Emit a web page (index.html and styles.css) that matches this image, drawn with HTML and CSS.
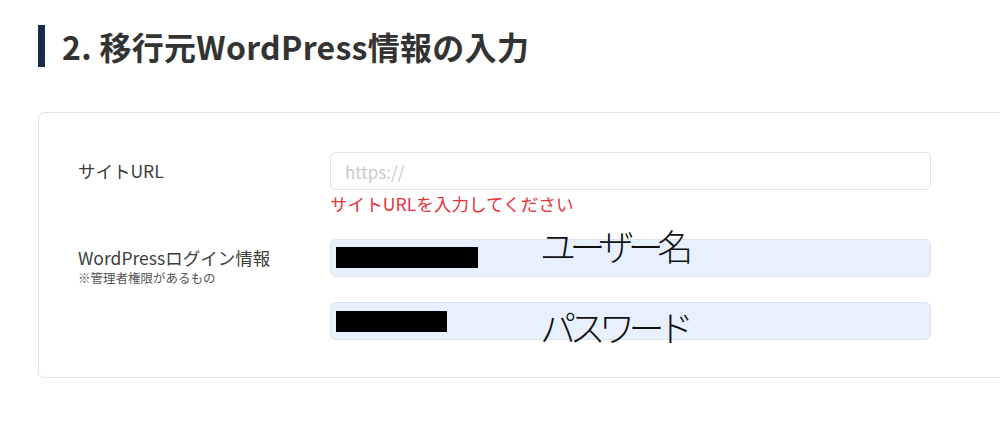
FILE: index.html
```html
<!DOCTYPE html>
<html lang="ja">
<head>
<meta charset="utf-8">
<title>移行元WordPress情報の入力</title>
<link rel="stylesheet" href="styles.css">
</head>
<body>
<div class="page">
  <h2 class="section-title">2. 移行元WordPress情報の入力</h2>
  <div class="card">
    <div class="row">
      <div class="label"><span class="label-main">サイトURL</span></div>
      <div class="control">
        <input class="field" type="text" placeholder="https://">
        <div class="error">サイトURLを入力してください</div>
      </div>
    </div>
    <div class="row row-login">
      <div class="label label-stack">
        <span class="label-main">WordPressログイン情報</span>
        <span class="label-note">※管理者権限があるもの</span>
      </div>
      <div class="control control-stack">
        <div class="field field-filled">
          <span class="redact redact-user"></span>
          <span class="annot annot-user">ユーザー名</span>
        </div>
        <div class="field field-filled">
          <span class="redact redact-pass"></span>
          <span class="annot annot-pass">パスワード</span>
        </div>
      </div>
    </div>
  </div>
</div>
</body>
</html>
```
FILE: styles.css
```css
html, body {
  margin: 0;
  padding: 0;
  background: #ffffff;
  overflow: hidden;
}
body {
  font-family: "Noto Sans CJK JP", "Noto Sans", sans-serif;
  color: #333333;
  width: 1000px;
  height: 424px;
}
.page {
  padding: 25px 0 0 38px;
}
.section-title {
  margin: 0;
  border-left: 7px solid #1b2a4a;
  padding-left: 17px;
  height: 42px;
  line-height: 42px;
  font-size: 32px;
  font-weight: 700;
  color: #333333;
  letter-spacing: 0.3px;
}
.card {
  margin-top: 45px;
  width: 1000px;
  border: 1px solid #e3e3e3;
  border-radius: 6px;
  padding: 39px 0 37px 39px;
}
.row {
  display: flex;
  align-items: flex-start;
}
.row-login {
  margin-top: 23px;
}
.label {
  width: 252px;
  flex: none;
  font-size: 17.5px;
  color: #3d3d3d;
}
.label-main {
  display: block;
  line-height: 38px;
}
.label-note {
  display: block;
  font-size: 12.5px;
  color: #555555;
  line-height: 14px;
  margin-top: -6px;
}
.control {
  width: 601px;
  flex: none;
  display: flex;
  flex-direction: column;
}
.control-stack {
  gap: 25px;
}
.field {
  box-sizing: border-box;
  display: block;
  width: 601px;
  height: 38px;
  margin: 0;
  border: 1px solid #e2e2e2;
  border-radius: 6px;
  padding: 0 14px;
  font-family: "Noto Sans CJK JP", "Noto Sans", sans-serif;
  font-size: 17px;
  color: #333333;
  background: #ffffff;
  outline: none;
}
.field::placeholder {
  color: #c9c9c9;
}
.field-filled {
  position: relative;
  background: #e8f0fe;
  border-color: #dde3ec;
  padding: 0;
}
.redact {
  position: absolute;
  left: 5px;
  background: #000000;
  height: 21px;
}
.redact-user {
  top: 7px;
  width: 142px;
}
.redact-pass {
  top: 8px;
  width: 111px;
}
.annot {
  position: absolute;
  left: 209px;
  font-size: 36px;
  line-height: 1;
  font-weight: 300;
  color: #111111;
  letter-spacing: -6.5px;
  white-space: nowrap;
}
.annot-user {
  top: -13px;
}
.annot-pass {
  top: 5px;
}
.error {
  margin-top: 2px;
  color: #e8323c;
  font-size: 17.6px;
  line-height: 24px;
}
```
